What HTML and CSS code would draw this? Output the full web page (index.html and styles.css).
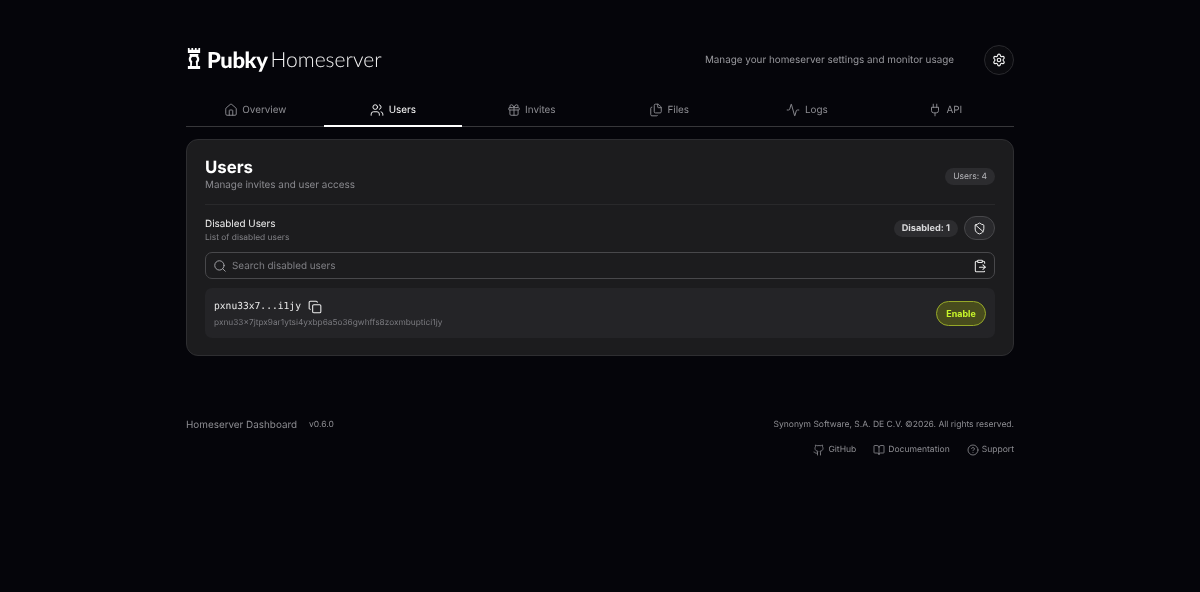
FILE: index.html
```html
<!DOCTYPE html>
<html lang="en">
<head>
<meta charset="utf-8">
<title>Pubky Homeserver</title>
<link rel="stylesheet" href="styles.css">
</head>
<body>
<div class="page">
  <header class="top">
    <div class="brand">
      <svg class="logo" viewBox="0 0 16 24" width="14" height="21" fill="#fff">
        <path d="M1 0h2v2h2V0h2v2h2V0h2v2h2V0h2v5.600H1z"/>
        <path d="M3 6.800h10v2H12.300c1.300 1.200 1.700 2.500 1.700 3.800 0 2-.9 3.200-1.600 4v4H15V24H1v-3.400h2.600v-4c-.7-.8-1.600-2-1.600-4 0-1.300.4-2.600 1.700-3.800H3zM8 9.600c-1.900 0-3.400 1.300-3.400 3 0 1.100.5 2 1.400 2.600l-.5 5.400h5l-.5-5.400c.9-.6 1.400-1.500 1.400-2.600 0-1.700-1.500-3-3.400-3z" fill-rule="evenodd"/>
      </svg>
      <span class="brand-name">Pubky</span><span class="brand-sub">Homeserver</span>
    </div>
    <div class="top-right">
      <span class="tagline">Manage your homeserver settings and monitor usage</span>
      <button class="gear" type="button" aria-label="Settings">
        <svg class="ic" viewBox="0 0 24 24" width="14" height="14"><path d="M9.671 4.136a2.34 2.34 0 0 1 4.659 0 2.34 2.34 0 0 0 3.319 1.915 2.34 2.34 0 0 1 2.330 4.033 2.34 2.34 0 0 0 0 3.831 2.34 2.34 0 0 1-2.330 4.033 2.34 2.34 0 0 0-3.319 1.915 2.34 2.34 0 0 1-4.659 0 2.34 2.34 0 0 0-3.320-1.915 2.34 2.34 0 0 1-2.330-4.033 2.34 2.34 0 0 0 0-3.831A2.34 2.34 0 0 1 6.350 6.051a2.34 2.34 0 0 0 3.319-1.915"/><circle cx="12" cy="12" r="3"/></svg>
      </button>
    </div>
  </header>

  <nav class="tabs">
    <a class="tab"><svg class="ic" viewBox="0 0 24 24" width="14" height="14"><path d="M15 21v-8a1 1 0 0 0-1-1h-4a1 1 0 0 0-1 1v8"/><path d="M3 10a2 2 0 0 1 .709-1.528l7-6a2 2 0 0 1 2.582 0l7 6A2 2 0 0 1 21 10v9a2 2 0 0 1-2 2H5a2 2 0 0 1-2-2z"/></svg>Overview</a>
    <a class="tab active"><svg class="ic" viewBox="0 0 24 24" width="14" height="14"><path d="M16 21v-2a4 4 0 0 0-4-4H6a4 4 0 0 0-4 4v2"/><path d="M16 3.128a4 4 0 0 1 0 7.744"/><path d="M22 21v-2a4 4 0 0 0-3-3.870"/><circle cx="9" cy="7" r="4"/></svg>Users</a>
    <a class="tab"><svg class="ic" viewBox="0 0 24 24" width="14" height="14"><rect x="3" y="8" width="18" height="4" rx="1"/><path d="M12 8v13"/><path d="M19 12v7a2 2 0 0 1-2 2H7a2 2 0 0 1-2-2v-7"/><path d="M7.500 8a2.500 2.500 0 0 1 0-5A4.800 8 0 0 1 12 8a4.800 8 0 0 1 4.500-5 2.500 2.500 0 0 1 0 5"/></svg>Invites</a>
    <a class="tab"><svg class="ic" viewBox="0 0 24 24" width="14" height="14"><path d="M15 2h-4a2 2 0 0 0-2 2v11a2 2 0 0 0 2 2h8a2 2 0 0 0 2-2V8"/><path d="M16.706 2.706A2.400 2.400 0 0 0 15 2v5a1 1 0 0 0 1 1h5a2.400 2.400 0 0 0-.706-1.706z"/><path d="M5 7a2 2 0 0 0-2 2v11a2 2 0 0 0 2 2h8a2 2 0 0 0 1.732-1"/></svg>Files</a>
    <a class="tab"><svg class="ic" viewBox="0 0 24 24" width="14" height="14"><path d="M22 12h-2.480a2 2 0 0 0-1.930 1.460l-2.350 8.360a.25.25 0 0 1-.480 0L9.240 2.180a.25.25 0 0 0-.480 0l-2.350 8.360A2 2 0 0 1 4.490 12H2"/></svg>Logs</a>
    <a class="tab"><svg class="ic" viewBox="0 0 24 24" width="14" height="14"><path d="M12 22v-5"/><path d="M9 8V2"/><path d="M15 8V2"/><path d="M18 8v5a4 4 0 0 1-4 4h-4a4 4 0 0 1-4-4V8Z"/></svg>API</a>
  </nav>

  <main class="card">
    <section class="card-head">
      <div>
        <h1 class="title">Users</h1>
        <p class="subtitle">Manage invites and user access</p>
      </div>
      <span class="badge head-badge">Users: 4</span>
    </section>

    <section class="section-head">
      <div class="section-text">
        <h2 class="section-title">Disabled Users</h2>
        <p class="section-sub">List of disabled users</p>
      </div>
      <div class="section-actions">
        <span class="badge strong">Disabled: 1</span>
        <button class="pill-icon" type="button" aria-label="Disabled filter">
          <svg class="ic" viewBox="0 0 24 24" width="13" height="13"><path d="M20 13c0 5-3.500 7.500-7.660 8.950a1 1 0 0 1-.670-.010C7.500 20.500 4 18 4 13V6a1 1 0 0 1 1-1c2 0 4.500-1.200 6.240-2.720a1.170 1.170 0 0 1 1.520 0C14.510 3.810 17 5 19 5a1 1 0 0 1 1 1z"/><path d="m4.243 5.210 14.390 12.472"/></svg>
        </button>
      </div>
    </section>

    <div class="search">
      <svg class="ic search-ic" viewBox="0 0 24 24" width="14" height="14"><path d="m21 21-4.340-4.340"/><circle cx="11" cy="11" r="8"/></svg>
      <span class="search-text">Search disabled users</span>
      <svg class="ic paste" viewBox="0 0 24 24" width="14" height="14"><path d="M11 14h10"/><path d="M16 4h2a2 2 0 0 1 2 2v1.344"/><path d="m17 18 4-4-4-4"/><path d="M8 4H6a2 2 0 0 0-2 2v14a2 2 0 0 0 2 2h12a2 2 0 0 0 1.793-1.113"/><rect x="8" y="2" width="8" height="4" rx="1"/></svg>
    </div>

    <div class="user">
      <div class="user-info">
        <div class="user-line">
          <span class="user-key">pxnu33x7...i1jy</span>
          <svg class="ic" viewBox="0 0 24 24" width="14" height="14"><rect x="8" y="8" width="14" height="14" rx="2"/><path d="M4 16c-1.100 0-2-.9-2-2V4c0-1.100.9-2 2-2h10c1.100 0 2 .9 2 2"/></svg>
        </div>
        <p class="user-full">pxnu33x7jtpx9ar1ytsi4yxbp6a5o36gwhffs8zoxmbuptici1jy</p>
      </div>
      <button class="enable" type="button">Enable</button>
    </div>
  </main>

  <footer class="foot">
    <div class="foot-left">
      <span class="foot-name">Homeserver Dashboard</span>
      <span class="foot-ver">v0.6.0</span>
    </div>
    <div class="foot-right">
      <span class="copy">Synonym Software, S.A. DE C.V. ©2026. All rights reserved.</span>
      <div class="links">
        <a class="link"><svg class="ic" viewBox="0 0 24 24" width="12" height="12"><path d="M15 22v-4a4.800 4.800 0 0 0-1-3.500c3 0 6-2 6-5.500.08-1.250-.27-2.480-1-3.500.28-1.150.28-2.350 0-3.500 0 0-1 0-3 1.500-2.640-.5-5.360-.5-8 0C6 2 5 2 5 2c-.3 1.150-.3 2.350 0 3.500A5.403 5.403 0 0 0 4 9c0 3.500 3 5.500 6 5.500-.39.490-.68 1.050-.85 1.650-.17.600-.22 1.230-.15 1.850v4"/><path d="M9 18c-4.510 2-5-2-7-2"/></svg>GitHub</a>
        <a class="link"><svg class="ic" viewBox="0 0 24 24" width="12" height="12"><path d="M12 7v14"/><path d="M3 18a1 1 0 0 1-1-1V4a1 1 0 0 1 1-1h5a4 4 0 0 1 4 4 4 4 0 0 1 4-4h5a1 1 0 0 1 1 1v13a1 1 0 0 1-1 1h-6a3 3 0 0 0-3 3 3 3 0 0 0-3-3z"/></svg>Documentation</a>
        <a class="link"><svg class="ic" viewBox="0 0 24 24" width="12" height="12"><circle cx="12" cy="12" r="10"/><path d="M9.090 9a3 3 0 0 1 5.830 1c0 2-3 3-3 3"/><path d="M12 17h.01"/></svg>Support</a>
      </div>
    </div>
  </footer>
</div>
</body>
</html>
```
FILE: styles.css
```css
* { box-sizing: border-box; }
html, body { margin: 0; height: 100%; }
body {
  background: #05050a;
  color: #fff;
  font-family: Inter, "Liberation Sans", sans-serif;
  text-rendering: geometricPrecision;
  overflow: hidden;
}
p, h1, h2 { margin: 0; }
.ic {
  fill: none;
  stroke: currentColor;
  stroke-width: 2;
  stroke-linecap: round;
  stroke-linejoin: round;
  flex: none;
}
.page {
  width: 828px;
  margin: 0 auto;
  padding-top: 45px;
  will-change: transform;
}
.top {
  display: flex;
  justify-content: space-between;
  align-items: center;
  height: 30px;
}
.brand { display: flex; align-items: center; padding-left: 1px; padding-bottom: 1px; }
.logo { margin-right: 6px; margin-top: -2px; }
.brand-name {
  font-family: Lato, sans-serif;
  font-size: 22px;
  font-weight: 900;
  letter-spacing: -0.4px;
  margin-right: 3px;
}
.brand-sub {
  font-family: Lato, sans-serif;
  font-size: 21px;
  font-weight: 300;
  color: #f4f4f4;
}
.top-right { display: flex; align-items: center; gap: 30px; }
.tagline { font-size: 9.9px; color: #98989d; padding-bottom: 1px; }
.gear {
  width: 30px;
  height: 30px;
  border-radius: 50%;
  border: 1px solid #2a2a2e;
  background: #0b0b0f;
  color: #f0f0f0;
  display: flex;
  align-items: center;
  justify-content: center;
  padding: 0;
}
.tabs {
  display: grid;
  grid-template-columns: repeat(6, 1fr);
  margin-top: 15px;
  border-bottom: 1px solid #37373a;
  height: 37px;
}
.tab {
  display: flex;
  align-items: center;
  justify-content: center;
  gap: 4.6px;
  height: 37px;
  padding-top: 5px;
  font-size: 9.9px;
  color: #8e8e93;
  border-bottom: 2px solid transparent;
}
.tab .ic { stroke-width: 1.6; }
.tab.active {
  color: #fff;
  border-bottom-color: #fff;
}
.card {
  margin-top: 12px;
  background: #1c1c1e;
  border: 1px solid #2e2e31;
  border-radius: 12px;
  padding: 19px 18px 18px;
  height: 217px;
}
.card-head {
  display: flex;
  justify-content: space-between;
  align-items: center;
  height: 46px;
  border-bottom: 1px solid #29292b;
  padding-top: 2px;
  padding-bottom: 14px;
}
.head-badge { margin-top: 2px; }
.title { font-size: 16.8px; font-weight: 700; line-height: 18px; }
.subtitle { font-size: 9.9px; color: #8a8a8f; line-height: 14px; margin-top: 1px; }
.badge {
  display: inline-flex;
  align-items: center;
  height: 17px;
  padding: 0 8px;
  border-radius: 9px;
  background: #2c2c2f;
  color: #b5b5b9;
  font-size: 8.5px;
}
.badge.strong { color: #d8d8da; font-weight: 700; font-size: 9.2px; }
.section-head {
  display: flex;
  justify-content: space-between;
  align-items: flex-start;
  margin-top: 11px;
  height: 24px;
}
.section-text { padding-top: 1px; }
.section-title { font-size: 9.9px; font-weight: 400; line-height: 15px; color: #f0f0f0; }
.section-sub { font-size: 8.4px; line-height: 12px; color: #808085; }
.section-actions { display: flex; align-items: center; gap: 6px; }
.pill-icon {
  width: 31px;
  height: 24px;
  border-radius: 12px;
  border: 1px solid #47474a;
  background: #29292c;
  color: #f0f0f0;
  display: flex;
  align-items: center;
  justify-content: center;
  padding: 0;
}
.pill-icon .ic, .paste { stroke-width: 1.8; }
.search {
  display: flex;
  align-items: center;
  margin-top: 12px;
  height: 27px;
  border: 1px solid #48484b;
  border-radius: 7px;
  padding: 0 7px;
  color: #a8a8ac;
}
.search-ic { stroke-width: 1.6; }
.search-text { flex: 1; margin-left: 5px; font-size: 9.9px; color: #808085; }
.paste { color: #e8e8e8; }
.user {
  display: flex;
  justify-content: space-between;
  align-items: center;
  margin-top: 9px;
  height: 50px;
  background: #242427;
  border-radius: 7px;
  padding: 0 9px;
}
.user-info { padding-top: 2px; }
.user-line { display: flex; align-items: center; gap: 7px; color: #eee; height: 15px; }
.user-line .ic { stroke-width: 1.8; }
.user-key { font-family: "DejaVu Sans Mono", monospace; font-size: 9.65px; color: #e8e8e8; }
.user-full { font-size: 8.3px; line-height: 12px; color: #7a7a7f; margin-top: 3px; }
.enable {
  height: 25px;
  width: 50px;
  border-radius: 13px;
  border: 1.5px solid #96a828;
  background: #484c1d;
  color: #c8f52a;
  font: 700 8.9px Inter, sans-serif;
  padding: 0;
}
.foot {
  display: flex;
  justify-content: space-between;
  align-items: flex-start;
  margin-top: 61px;
}
.foot-left { display: flex; align-items: center; gap: 12px; height: 16px; }
.foot-name { font-size: 9.9px; color: #8e8e93; }
.foot-ver { font-size: 8.5px; color: #8e8e93; }
.foot-right { display: flex; flex-direction: column; align-items: flex-end; }
.copy { font-size: 8.5px; line-height: 16px; color: #8e8e93; }
.links { display: flex; gap: 17px; margin-top: 9px; }
.link { display: flex; align-items: center; gap: 3px; font-size: 8.55px; line-height: 16px; color: #8e8e93; }
.link .ic { stroke-width: 1.6; }
```
